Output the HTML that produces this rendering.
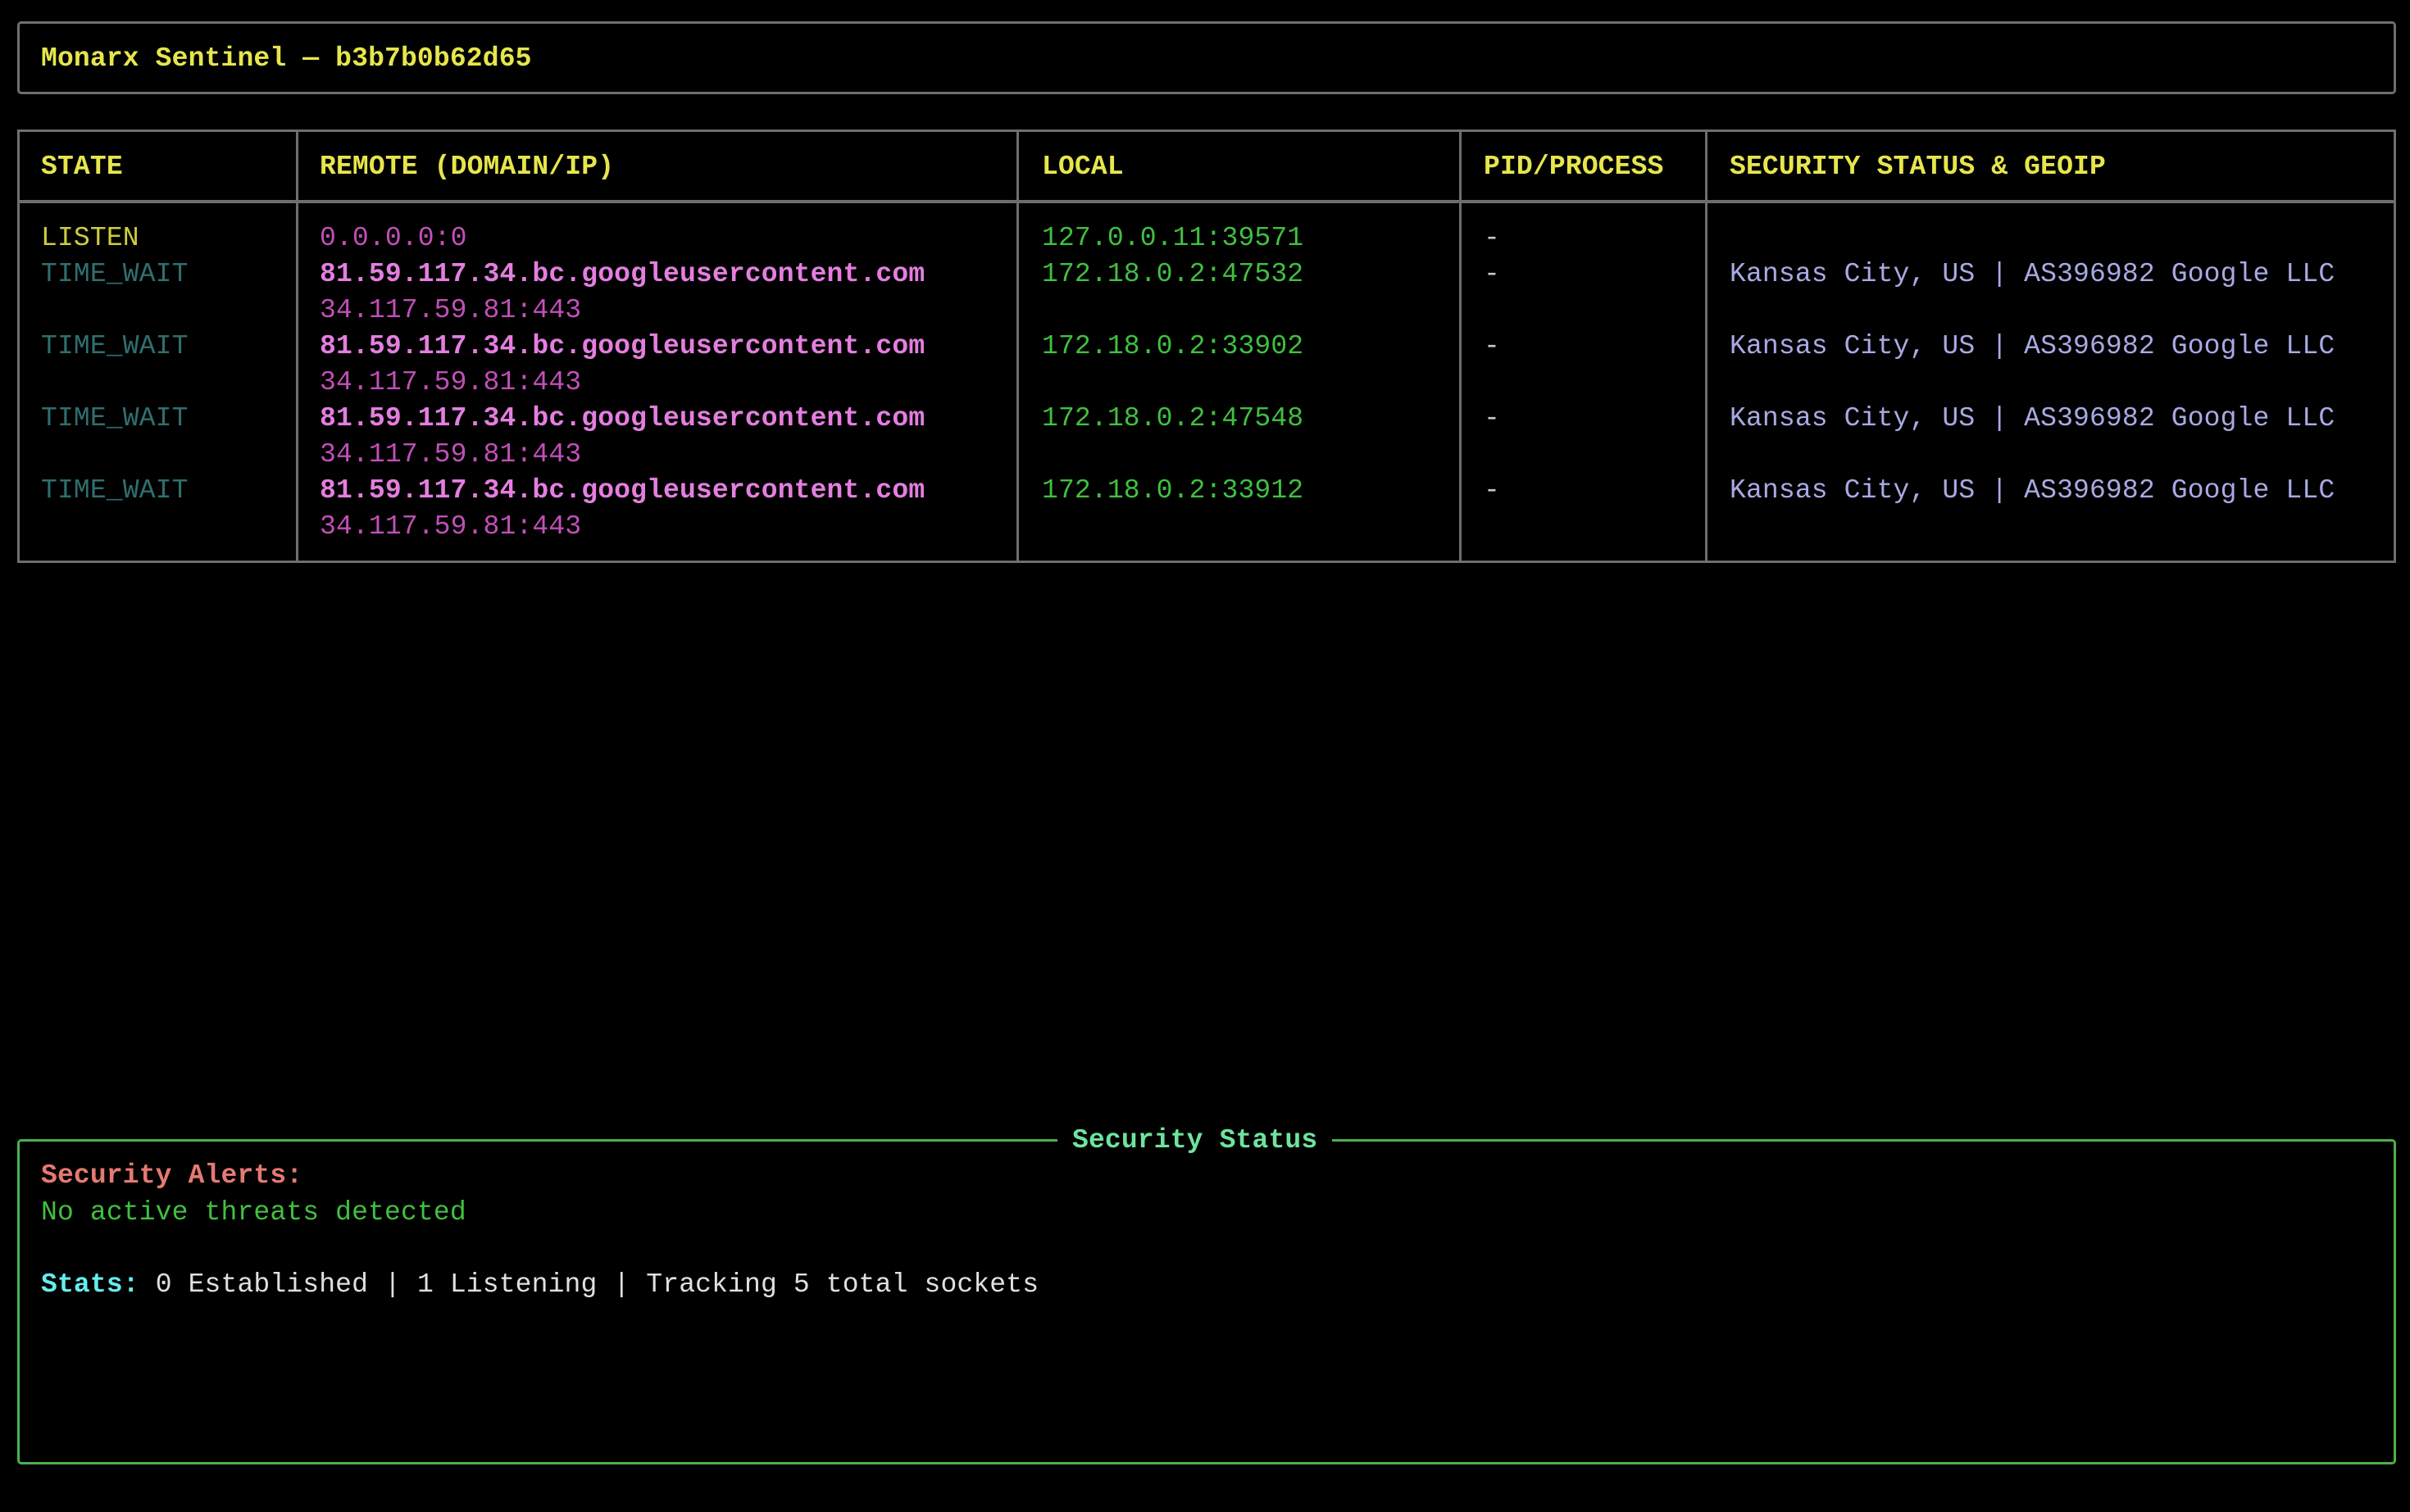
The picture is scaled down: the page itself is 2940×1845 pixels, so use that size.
<!DOCTYPE html>
<html><head><meta charset="utf-8"><style>
html,body{margin:0;padding:0;background:#000;width:2940px;height:1845px;overflow:hidden}
body{position:relative;font-family:"Liberation Mono","DejaVu Sans Mono",monospace;font-size:33px;letter-spacing:0.15px}
.t{position:absolute;white-space:pre;line-height:44px;height:44px}
.box{position:absolute;box-sizing:border-box}
.y{color:#e6e64c;font-weight:bold}.ly{color:#cccc40}.tw{color:#2f6f6f}.mb{color:#e47ee0;font-weight:bold}.ip{color:#c24fb8}
.g{color:#40c040}.gw{color:#c8c8c8}.geo{color:#a9a9e4}
</style></head><body>
<div class="box" style="left:21px;top:26px;width:2902px;height:89px;border:3px solid #6e6e6e;border-radius:5px"></div>
<div class="t y" style="left:50px;top:50px">Monarx Sentinel — b3b7b0b62d65</div>

<div class="box" style="left:21px;top:158px;width:2902px;height:529px;border:3px solid #6e6e6e"></div>
<div class="box" style="left:21px;top:244px;width:2902px;height:0;border-top:4px solid #6e6e6e"></div>
<div class="box" style="left:361px;top:158px;width:0;height:529px;border-left:3px solid #6e6e6e"></div>
<div class="box" style="left:1240px;top:158px;width:0;height:529px;border-left:3px solid #6e6e6e"></div>
<div class="box" style="left:1780px;top:158px;width:0;height:529px;border-left:3px solid #6e6e6e"></div>
<div class="box" style="left:2080px;top:158px;width:0;height:529px;border-left:3px solid #6e6e6e"></div>

<div class="t y" style="left:50px;top:182px">STATE</div>
<div class="t y" style="left:390px;top:182px">REMOTE (DOMAIN/IP)</div>
<div class="t y" style="left:1271px;top:182px">LOCAL</div>
<div class="t y" style="left:1810px;top:182px">PID/PROCESS</div>
<div class="t y" style="left:2110px;top:182px">SECURITY STATUS &amp; GEOIP</div>

<div class="t ly" style="left:50px;top:269px">LISTEN</div>
<div class="t ip" style="left:390px;top:269px">0.0.0.0:0</div>
<div class="t g" style="left:1271px;top:269px">127.0.0.11:39571</div>
<div class="t gw" style="left:1810px;top:269px">-</div>

<div class="t tw" style="left:50px;top:313px">TIME_WAIT</div>
<div class="t mb" style="left:390px;top:313px">81.59.117.34.bc.googleusercontent.com</div>
<div class="t ip" style="left:390px;top:357px">34.117.59.81:443</div>
<div class="t g" style="left:1271px;top:313px">172.18.0.2:47532</div>
<div class="t gw" style="left:1810px;top:313px">-</div>
<div class="t geo" style="left:2110px;top:313px">Kansas City, US | AS396982 Google LLC</div>

<div class="t tw" style="left:50px;top:401px">TIME_WAIT</div>
<div class="t mb" style="left:390px;top:401px">81.59.117.34.bc.googleusercontent.com</div>
<div class="t ip" style="left:390px;top:445px">34.117.59.81:443</div>
<div class="t g" style="left:1271px;top:401px">172.18.0.2:33902</div>
<div class="t gw" style="left:1810px;top:401px">-</div>
<div class="t geo" style="left:2110px;top:401px">Kansas City, US | AS396982 Google LLC</div>

<div class="t tw" style="left:50px;top:489px">TIME_WAIT</div>
<div class="t mb" style="left:390px;top:489px">81.59.117.34.bc.googleusercontent.com</div>
<div class="t ip" style="left:390px;top:533px">34.117.59.81:443</div>
<div class="t g" style="left:1271px;top:489px">172.18.0.2:47548</div>
<div class="t gw" style="left:1810px;top:489px">-</div>
<div class="t geo" style="left:2110px;top:489px">Kansas City, US | AS396982 Google LLC</div>

<div class="t tw" style="left:50px;top:577px">TIME_WAIT</div>
<div class="t mb" style="left:390px;top:577px">81.59.117.34.bc.googleusercontent.com</div>
<div class="t ip" style="left:390px;top:621px">34.117.59.81:443</div>
<div class="t g" style="left:1271px;top:577px">172.18.0.2:33912</div>
<div class="t gw" style="left:1810px;top:577px">-</div>
<div class="t geo" style="left:2110px;top:577px">Kansas City, US | AS396982 Google LLC</div>

<div class="box" style="left:21px;top:1390px;width:2902px;height:397px;border:3px solid #4cb04c;border-radius:5px"></div>
<div class="t" style="left:1290px;top:1370px;padding:0 18px;background:#000;color:#6ee39e;font-weight:bold">Security Status</div>
<div class="t" style="left:50px;top:1413px;color:#e47a72;font-weight:bold">Security Alerts:</div>
<div class="t g" style="left:50px;top:1458px">No active threats detected</div>
<div class="t" style="left:50px;top:1546px;color:#e0e0e0"><span style="color:#66ecec;font-weight:bold">Stats:</span> 0 Established | 1 Listening | Tracking 5 total sockets</div>
</body></html>
